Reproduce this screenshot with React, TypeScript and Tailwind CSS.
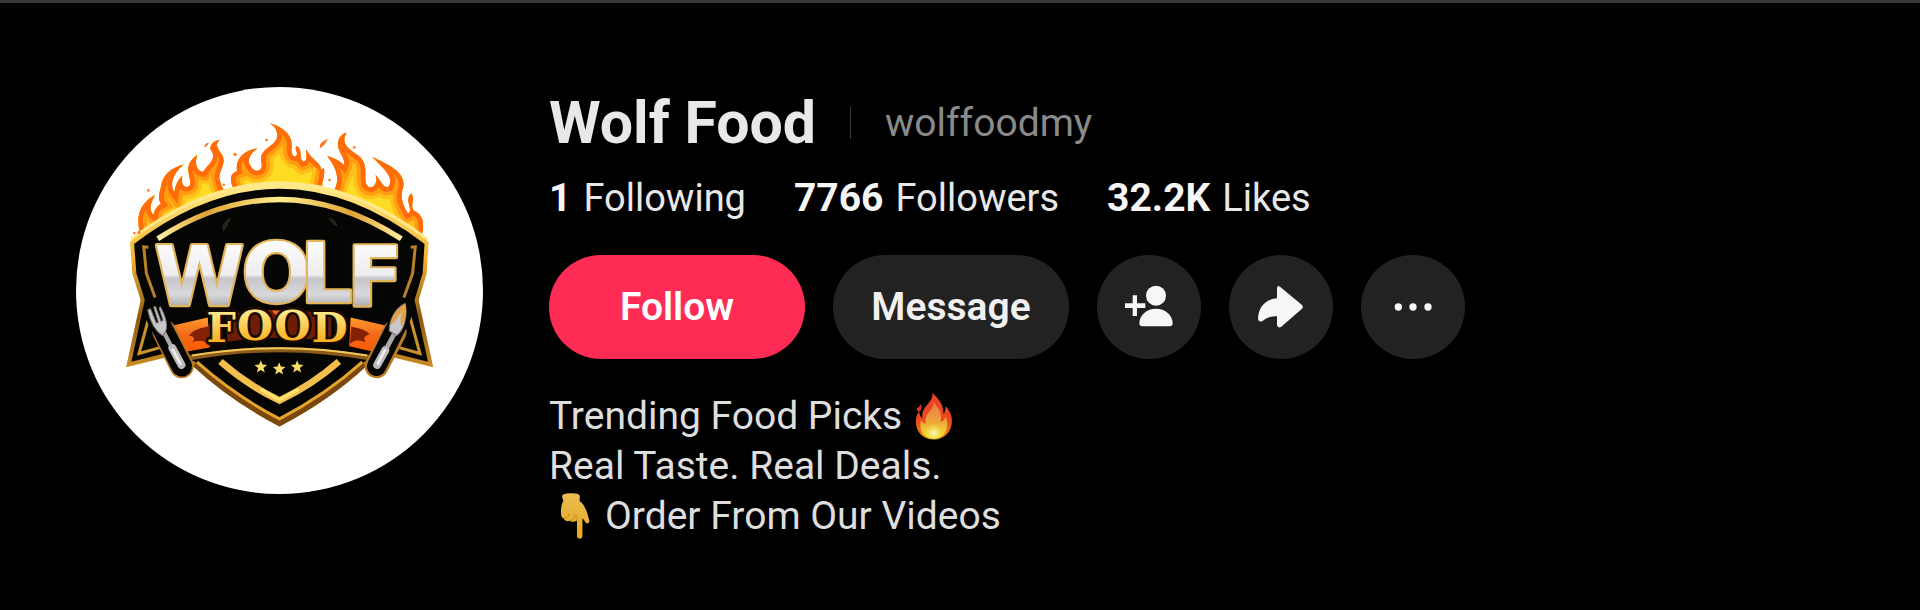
import { useState, type ReactNode } from "react";

type Stat = {
  value: string;
  label: string;
};

const stats: Stat[] = [
  { value: "1", label: "Following" },
  { value: "7766", label: "Followers" },
  { value: "32.2K", label: "Likes" },
];

const FLAMES =
  "M242 497C222 440 240 398 284 375C266 405 268 425 280 434C282 420 290 408 302 402C290 385 298 365 302 350C306 312 335 292 370 283C338 308 326 345 342 366C346 340 356 325 366 318C360 345 374 358 388 346C398 325 360 290 410 255C400 290 415 305 428 306C440 284 474 268 450 238C450 220 460 212 478 210C460 225 475 240 486 256C500 285 466 310 480 335C482 350 490 360 500 368L508 480L518 480L525 365C505 335 508 310 530 302C522 265 555 240 590 235C565 255 558 275 572 290C580 310 610 305 603 278C592 230 655 230 650 192C648 175 640 168 627 160C665 170 700 195 693 235C692 255 700 264 708 256C714 245 700 240 708 228C728 238 714 264 728 275C744 270 735 250 738 238C748 265 790 285 780 300L790 294C795 320 782 335 785 355L798 480L808 480L820 362C838 330 832 300 800 258C826 266 840 274 850 285C858 265 826 240 833 215C836 200 846 190 858 188C836 225 872 240 900 262C925 290 908 320 918 345C932 364 955 340 945 315C965 335 966 355 984 350C1004 320 962 290 935 260C985 285 1035 305 1028 350C1018 380 1024 400 1042 430C1062 420 1028 392 1052 370C1066 390 1046 404 1060 422C1084 430 1095 460 1083 495L657 600Z";

const SHIELD =
  "M215 518Q657 182 1098 518L1092 610L1068 690L1110 883L985 852L915 880Q800 985 657 1062Q515 985 400 880L330 852L205 883L247 690L222 610Z";

const STAR =
  "M0 -20L5 -7L19 -6L8 3L12 17L0 9L-12 17L-8 3L-19 -6L-5 -7Z";

function Logo() {
  return (
    <svg viewBox="47 51 1220 1220" className="size-full" role="img" aria-label="Wolf Food logo">
      <defs>
        <linearGradient id="gold" x1="0" y1="0" x2="0" y2="1">
          <stop offset="0" stopColor="#ffe98a" />
          <stop offset="0.3" stopColor="#f3b42e" />
          <stop offset="0.55" stopColor="#8f5a12" />
          <stop offset="0.75" stopColor="#c98a24" />
          <stop offset="1" stopColor="#a8660f" />
        </linearGradient>
        <linearGradient id="goldArch" x1="0" y1="0" x2="1" y2="0">
          <stop offset="0" stopColor="#fff0a0" />
          <stop offset="0.2" stopColor="#e0a236" />
          <stop offset="0.5" stopColor="#fff08c" />
          <stop offset="0.8" stopColor="#e0a236" />
          <stop offset="1" stopColor="#fff0a0" />
        </linearGradient>
        <linearGradient id="silver" x1="0" y1="0" x2="0" y2="1">
          <stop offset="0.1" stopColor="#ffffff" />
          <stop offset="0.5" stopColor="#ededf0" />
          <stop offset="0.54" stopColor="#c6c5c9" />
          <stop offset="0.7" stopColor="#d9d8db" />
          <stop offset="0.85" stopColor="#a3a2a6" />
        </linearGradient>
        <linearGradient id="butter" x1="0" y1="0" x2="0" y2="1">
          <stop offset="0.2" stopColor="#ffe98e" />
          <stop offset="0.8" stopColor="#fbae1c" />
        </linearGradient>
        <linearGradient id="ribbon" x1="0" y1="0" x2="0" y2="1">
          <stop offset="0" stopColor="#ff9a2e" />
          <stop offset="0.5" stopColor="#f3691a" />
          <stop offset="1" stopColor="#ff5a00" />
        </linearGradient>
        <clipPath id="flameClip">
          <path d={FLAMES} />
        </clipPath>
      </defs>

      {/* fire */}
      <g clipPath="url(#flameClip)">
        <path d={FLAMES} fill="#ffdc24" stroke="#ffc01c" strokeWidth="72" />
        <path d={FLAMES} fill="none" stroke="#ff9c10" strokeWidth="50" />
        <path d={FLAMES} fill="none" stroke="#ff6c0c" strokeWidth="28" />
      </g>
      <path d="M215 510Q657 174 1098 510" fill="none" stroke="#ffe98a" strokeWidth="16" />
      <g fill="#ff7a2a">
        <path d="M778 235C776 218 786 214 802 206C796 218 792 226 778 235Z" />
        <path d="M432 232Q432 218 446 217Q442 228 432 232Z" />
        <circle cx="524" cy="253" r="5" />
        <circle cx="618" cy="210" r="4" />
        <circle cx="881" cy="232" r="4" />
        <circle cx="490" cy="344" r="4" />
        <circle cx="264" cy="361" r="4" />
        <circle cx="807" cy="330" r="4" />
        <circle cx="222" cy="489" r="4" />
        <circle cx="236" cy="487" r="5" />
      </g>

      {/* shield */}
      <path d={SHIELD} fill="#050604" stroke="url(#gold)" strokeWidth="12" />
      <path d="M405 880Q515 982 657 1056Q800 982 910 880" fill="none" stroke="#7a470c" strokeWidth="22" />
      <path d="M410 876Q520 974 657 1046Q795 974 905 876" fill="none" stroke="#e3a52d" strokeWidth="9" />
      <path d="M292 506Q657 270 1022 506" fill="none" stroke="url(#goldArch)" strokeWidth="16" />
      <path d="M264 531L250 530L258 610L284 682M1050 531L1064 530L1056 610L1030 682" fill="none" stroke="#b98228" strokeWidth="9" />
      <path d="M266 740L236 850L306 830M1048 740L1078 850L1008 830" fill="none" stroke="#c9922e" strokeWidth="9" />
      <path d="M480 874Q560 944 657 991Q755 944 835 874" fill="none" stroke="#f2bf4c" strokeWidth="20" />
      <path d="M600 957L657 989L714 957" fill="none" stroke="#ffe474" strokeWidth="10" />
      <path d="M485 470Q490 450 512 442Q508 462 488 485ZM804 442Q828 448 832 470Q816 468 804 442Z" fill="#22231d" />

      {/* ribbon */}
      <path d="M300 750Q657 660 1014 750L950 872Q657 800 365 872Z" fill="#050604" />
      <path d="M380 864Q657 812 935 864" fill="none" stroke="#8b5a18" strokeWidth="16" />
      <path d="M395 856Q657 812 920 856" fill="none" stroke="#f2c65c" strokeWidth="6" />
      <path d="M328 768L442 742L448 832L366 846Z" fill="url(#ribbon)" />
      <path d="M984 768L870 742L866 828L946 846Z" fill="url(#ribbon)" />
      <path d="M440 770Q400 776 385 796Q410 800 396 816Q430 804 446 828L450 760ZM872 770Q912 776 927 792Q902 800 916 816Q882 804 868 822Z" fill="#842006" />
      <path d="M500 735Q657 702 812 735L812 815Q657 790 500 815Z" fill="#6d1c05" />
      <path d="M634 722H678L656 744Z" fill="#f06a20" />

      {/* wordmark */}
      <g className="font-bold [paint-order:stroke]" strokeLinejoin="round">
        <text x="282 544 720 860" y="704 694 694 704" fontFamily="DejaVu Sans" fontSize="244" fill="url(#silver)" stroke="#e3b55a" strokeWidth="13">
          WOLF
        </text>
        <text x="438 530 642 754" y="816 808 808 816" fontFamily="DejaVu Serif" fontSize="124" fill="url(#butter)" stroke="#1a0b02" strokeWidth="16">
          FOOD
        </text>
      </g>

      <g fill="#f8dc69">
        <path d={STAR} transform="translate(601 890)" />
        <path d={STAR} transform="translate(656 896)" />
        <path d={STAR} transform="translate(710 890)" />
      </g>

      {/* fork */}
      <g strokeLinecap="round">
        <path d="M312 785L364 888" stroke="#b97a25" strokeWidth="72" />
        <path d="M280 725L364 888" stroke="#050604" strokeWidth="62" />
        <path d="M310 785L330 824" stroke="#a9a7a8" strokeWidth="13" />
        <path d="M336 834L363 884" stroke="#bdbbbd" strokeWidth="24" />
        <path d="M337 838L360 880" stroke="#ededef" strokeWidth="8" />
        <path d="M262 720Q274 776 306 796Q334 774 300 710L296 714L308 750L302 754L285 708L280 711L294 756L288 759L270 715Z" fill="#c9c7c9" stroke="#77716e" strokeWidth="3" />
      </g>

      {/* knife */}
      <g strokeLinecap="round">
        <path d="M1002 785L948 888" stroke="#b97a25" strokeWidth="72" />
        <path d="M1024 735L948 888" stroke="#050604" strokeWidth="58" />
        <path d="M1004 785L980 830" stroke="#a9a7a8" strokeWidth="14" />
        <path d="M974 840L950 884" stroke="#bdbbbd" strokeWidth="24" />
        <path d="M973 840L952 880" stroke="#ededef" strokeWidth="8" />
        <path d="M1034 700C1000 716 986 752 986 782L1008 796C1030 780 1042 740 1034 700Z" fill="#c9c7c9" stroke="#77716e" strokeWidth="3" />
        <path d="M1034 700C1006 716 994 740 990 764C1010 756 1014 730 1024 728C1018 744 1018 756 1022 768C1036 748 1040 724 1034 700Z" fill="#e2a04a" />
      </g>
    </svg>
  );
}

function FireEmoji() {
  return (
    <svg viewBox="1148 36 118 146" className="h-12 w-10" role="img" aria-label="fire">
      <defs>
        <linearGradient id="fireOuter" x1="0" y1="0" x2="0" y2="1">
          <stop offset="0" stopColor="#e8402a" />
          <stop offset="0.6" stopColor="#ea4a1c" />
          <stop offset="1" stopColor="#f08a10" />
        </linearGradient>
        <linearGradient id="fireInner" x1="0" y1="0" x2="0" y2="1">
          <stop offset="0" stopColor="#ea7a48" />
          <stop offset="0.5" stopColor="#eda03c" />
          <stop offset="1" stopColor="#f4e62c" />
        </linearGradient>
        <radialGradient id="fireCore">
          <stop offset="0" stopColor="#fbf7dc" />
          <stop offset="1" stopColor="#f4e62c" stopOpacity="0" />
        </radialGradient>
      </defs>
      <path d="M1202 38C1216 54 1236 66 1236 104C1240 98 1242 88 1242 80C1256 92 1264 112 1261 132C1258 160 1238 180 1207 180C1174 180 1153 158 1152 130C1151 112 1156 104 1162 94C1162 104 1165 112 1172 116C1166 78 1206 70 1202 38Z" fill="url(#fireOuter)" />
      <path d="M1168 72Q1172 84 1164 96Q1152 94 1156 84Q1162 84 1168 72Z" fill="#d8351f" />
      <path d="M1206 64C1216 84 1232 92 1228 126C1236 126 1240 118 1242 110C1256 142 1242 178 1207 178C1172 178 1160 150 1168 122C1172 130 1178 132 1182 132C1176 100 1208 92 1206 64Z" fill="url(#fireInner)" />
      <ellipse cx="1207" cy="160" rx="28" ry="28" fill="url(#fireCore)" />
    </svg>
  );
}

function PointDownEmoji() {
  return (
    <svg viewBox="80 332 108 148" className="h-12 w-9" role="img" aria-label="pointing down">
      <defs>
        <linearGradient id="skin" x1="0" y1="0" x2="0" y2="1">
          <stop offset="0" stopColor="#e9bd52" />
          <stop offset="1" stopColor="#e6a91c" />
        </linearGradient>
      </defs>
      <path d="M94 346C94 338 108 336 122 336C138 336 149 338 149 346L148 360C162 368 170 388 178 420C180 428 172 432 167 426L157 412V468C157 479 140 479 140 468V420C130 426 120 424 116 421C106 424 100 418 100 414C92 412 91 404 91 396C90 380 94 366 98 360Z" fill="url(#skin)" />
      <path d="M100 413C110 412 116 404 116 398M116 420C128 420 134 412 136 402M140 422V404" fill="none" stroke="#c98a18" strokeWidth="3" />
    </svg>
  );
}

function IconButton({ label, children }: { label: string; children: ReactNode }) {
  return (
    <button aria-label={label} className="flex size-[104px] items-center justify-center rounded-full bg-[#222222] text-[#f6f6f6] hover:bg-[#2e2e2e]">
      {children}
    </button>
  );
}

export default function App() {
  const [following, setFollowing] = useState(false);

  return (
    <div className="min-h-screen border-t-3 border-[#383838] bg-black font-['Roboto',sans-serif] text-[#e8e8e8]">
      <main className="flex items-start gap-[66px] px-[76px] pt-[84px]">
        <div className="size-[407px] shrink-0 overflow-hidden rounded-full bg-white">
          <Logo />
        </div>

        <div className="min-w-0 flex-1">
          {/* name */}
          <div className="flex items-center gap-[34px]">
            <h1 className="text-[59px] leading-[72px] font-bold">Wolf Food</h1>
            <span className="h-8 w-px bg-[#3a3a3a]" />
            <h2 className="text-[39px] leading-[72px] text-[#8a8a8a]">wolffoodmy</h2>
          </div>

          {/* counts */}
          <div className="mt-4 flex gap-12 text-[38px] leading-[46px]">
            {stats.map((s) => (
              <div key={s.label} className="flex items-baseline gap-3">
                <strong className="text-[39px] font-bold text-[#f6f6f6]">{s.value}</strong>
                <span>{s.label}</span>
              </div>
            ))}
          </div>

          {/* actions */}
          <div className="mt-[34px] flex gap-7 text-[39px] font-semibold">
            <button
              onClick={() => setFollowing(!following)}
              className="h-[104px] w-64 rounded-full bg-[#fe2c55] text-white hover:bg-[#ef2950]"
            >
              {following ? "Following" : "Follow"}
            </button>
            <button className="h-[104px] w-[236px] rounded-full bg-[#222222] text-[#f0f0f0] hover:bg-[#2e2e2e]">
              Message
            </button>
            <IconButton label="Suggested accounts">
              <svg viewBox="136 130 144 144" className="size-12" fill="currentColor">
                <circle cx="229" cy="168" r="30" />
                <path d="M229 207C257 207 278 226 279 250Q279 260 270 260H188Q179 260 179 250C180 226 201 207 229 207Z" />
                <path d="M159 167H172V191H197V205H172V229H159V205H136V191H159Z" />
              </svg>
            </IconButton>
            <IconButton label="Share">
              <svg viewBox="533 130 144 144" className="size-12" fill="currentColor">
                <path d="M593 145Q594 136 602 141L668 196Q673 202 668 207L605 262Q595 266 593 257V230C572 229 560 236 550 244Q539 249 536 238C537 202 558 178 593 176Z" />
              </svg>
            </IconButton>
            <IconButton label="More">
              <svg viewBox="930 130 144 144" className="size-12" fill="currentColor">
                <circle cx="958" cy="202" r="11" />
                <circle cx="1002" cy="202" r="11" />
                <circle cx="1047" cy="202" r="11" />
              </svg>
            </IconButton>
          </div>

          {/* bio */}
          <div className="mt-8 text-[39px] leading-[50px] text-[#dedede]">
            <p className="flex items-center gap-3">
              Trending Food Picks <FireEmoji />
            </p>
            <p>Real Taste. Real Deals.</p>
            <p className="flex items-center gap-3 pl-2">
              <PointDownEmoji /> Order From Our Videos
            </p>
          </div>
        </div>
      </main>
    </div>
  );
}
